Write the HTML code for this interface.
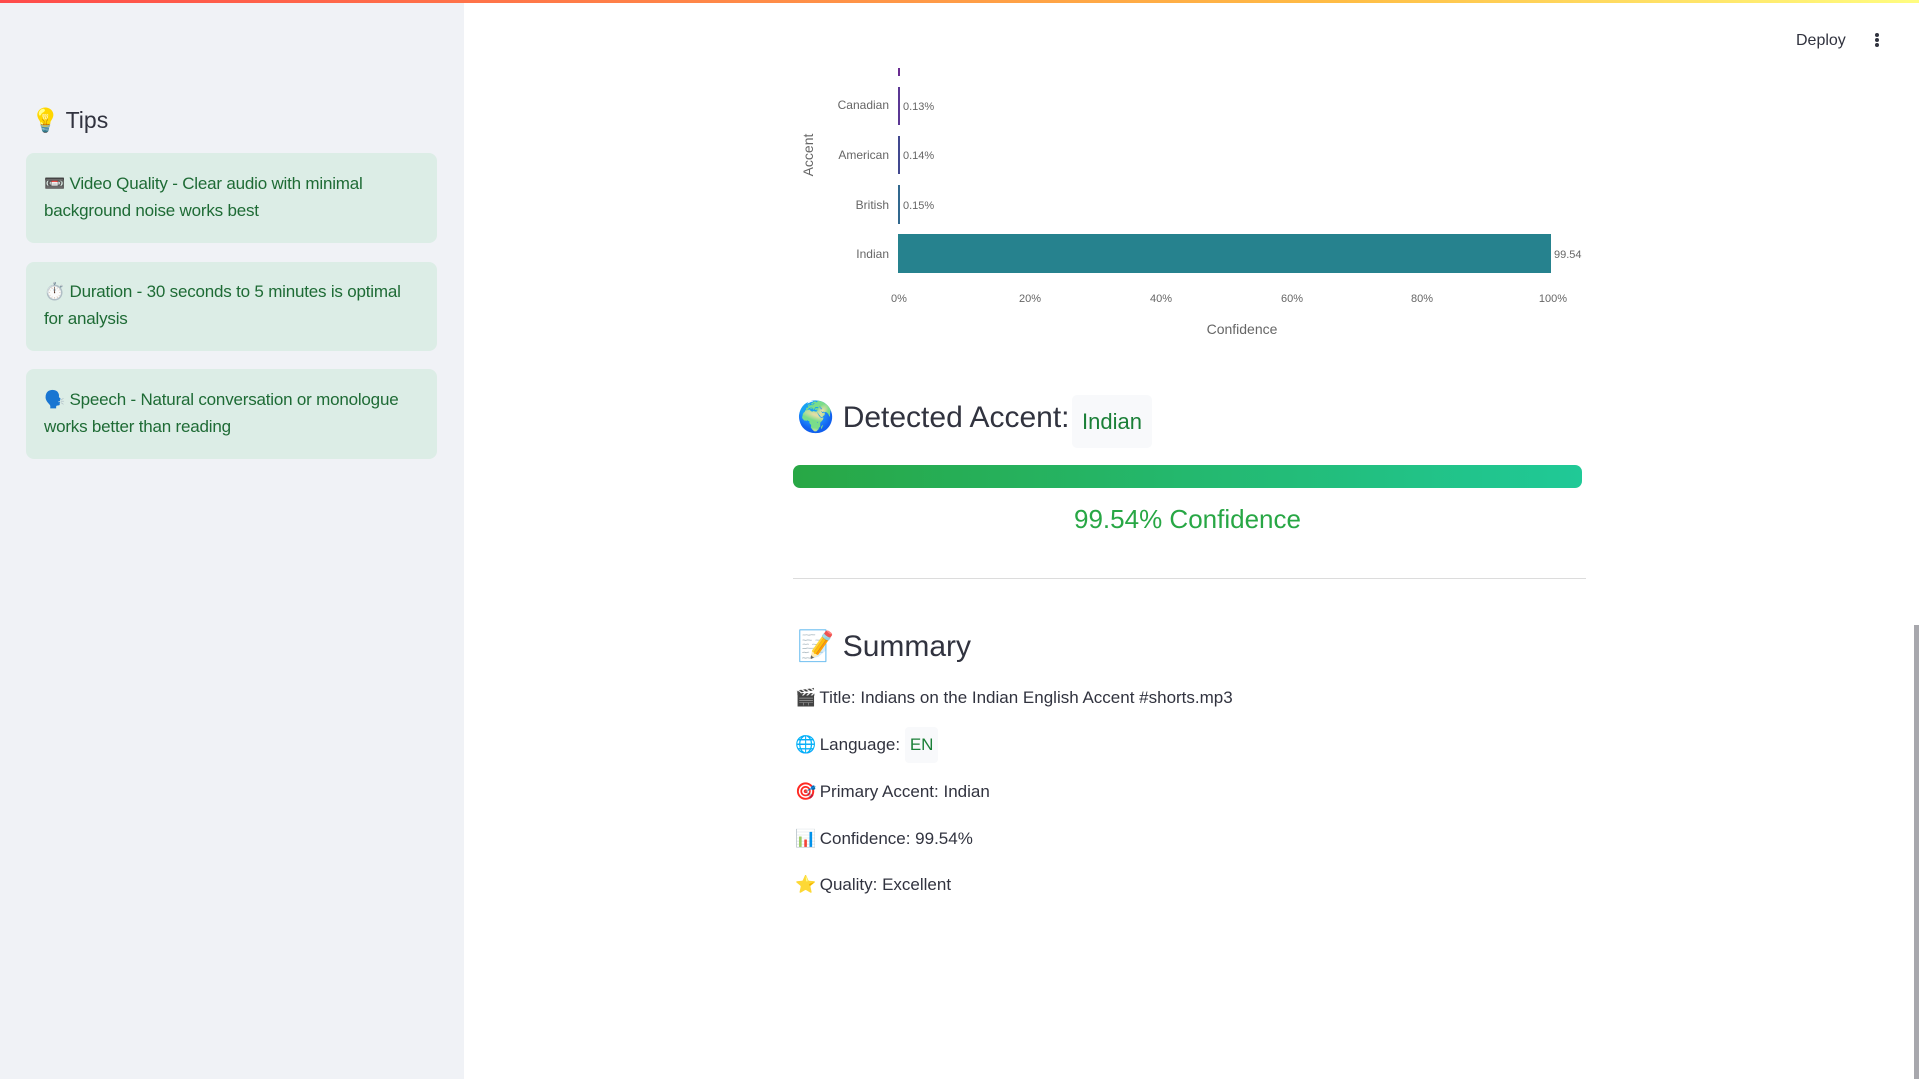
<!DOCTYPE html>
<html><head><meta charset="utf-8"><style>
*{margin:0;padding:0;box-sizing:border-box}
body{width:1919px;height:1079px;overflow:hidden;background:#fff;font-family:"Liberation Sans",sans-serif;position:relative;color:#31333f}
.top{position:absolute;left:0;top:0;width:1919px;height:3px;background:linear-gradient(90deg,#ff4b4b,#ffbd45 70%,#fffd80);z-index:5}
.side{position:absolute;left:0;top:0;width:464px;height:1079px;background:#f0f2f6}
.tips{position:absolute;left:31px;top:107px;font-size:23px;color:#31333f}
.card{position:absolute;left:26px;width:411px;background:#dcede6;border-radius:8px;padding:0 18px;color:#1e6b35;font-size:17px;line-height:27px;letter-spacing:-0.2px}
.abs{position:absolute;white-space:nowrap}
.li{position:absolute;left:795px;font-size:17px;line-height:22px;height:22px;color:#31333f;white-space:nowrap}
.li .ic{display:inline-block;width:20px}
</style></head><body>
<div class="top"></div>
<div class="side"></div>
<div class="tips">💡 Tips</div>
<div class="card" style="top:153px;height:90px;padding-top:17px">📼 Video Quality - Clear audio with minimal background noise works best</div>
<div class="card" style="top:262px;height:89px;padding-top:16px">⏱️ Duration - 30 seconds to 5 minutes is optimal for analysis</div>
<div class="card" style="top:369px;height:90px;padding-top:17px">🗣️ Speech - Natural conversation or monologue works better than reading</div>

<div class="abs" style="left:1796px;top:32px;font-size:16px;color:#31333f">Deploy</div>
<div class="abs" style="left:1875px;top:33px;width:4px">
<div style="width:4px;height:4px;border-radius:2px;background:#31333f;margin-bottom:1px"></div>
<div style="width:4px;height:4px;border-radius:2px;background:#31333f;margin-bottom:1px"></div>
<div style="width:4px;height:4px;border-radius:2px;background:#31333f"></div></div>

<svg class="abs" style="left:0;top:0" width="1919" height="360" font-family="Liberation Sans,sans-serif" font-size="12" fill="#666">
<rect x="898" y="68" width="2" height="8" fill="#6a2c91"/>
<rect x="898" y="87" width="2" height="38" fill="#5b3794"/>
<rect x="898" y="136" width="2" height="38" fill="#41488f"/>
<rect x="898" y="185" width="2" height="39" fill="#31688e"/>
<rect x="898" y="234" width="653" height="39" fill="#26828e"/>
<text x="889" y="109" text-anchor="end">Canadian</text>
<text x="889" y="159" text-anchor="end">American</text>
<text x="889" y="209" text-anchor="end">British</text>
<text x="889" y="258" text-anchor="end">Indian</text>
<text x="903" y="110" font-size="11">0.13%</text>
<text x="903" y="159" font-size="11">0.14%</text>
<text x="903" y="209" font-size="11">0.15%</text>
<text x="1554" y="258" font-size="11">99.54</text>
<g font-size="11" text-anchor="middle"><text x="899" y="302">0%</text><text x="1030" y="302">20%</text><text x="1161" y="302">40%</text><text x="1292" y="302">60%</text><text x="1422" y="302">80%</text><text x="1553" y="302">100%</text></g>
<text x="1242" y="334" text-anchor="middle" font-size="14">Confidence</text>
<text transform="translate(813,155) rotate(-90)" text-anchor="middle" font-size="14">Accent</text>
</svg>

<div class="abs" style="left:797px;top:400px;font-size:30px;color:#31333f">🌍 Detected Accent:</div>
<div class="abs" style="left:1072px;top:395px;width:80px;height:53px;background:#f8f9fb;border-radius:5px;color:#1a7f37;font-size:22px;line-height:53px;text-align:center">Indian</div>
<div class="abs" style="left:793px;top:465px;width:789px;height:23px;border-radius:7px;background:linear-gradient(90deg,#28a745,#20c997)"></div>
<div class="abs" style="left:793px;top:504px;width:789px;text-align:center;font-size:26px;color:#28a745">99.54% Confidence</div>
<div class="abs" style="left:793px;top:578px;width:793px;height:1px;background:#dcdcdc"></div>

<div class="abs" style="left:797px;top:629px;font-size:30px;color:#31333f">📝 Summary</div>
<div class="li" style="top:687px"><span class="ic">🎬</span> Title: Indians on the Indian English Accent #shorts.mp3</div>
<div class="li" style="top:734px"><span class="ic">🌐</span> Language: <span style="display:inline-block;background:#f8f9fb;color:#1a7f37;padding:0 5px;line-height:36px;height:36px;margin-top:-7px;vertical-align:top;border-radius:4px">EN</span></div>
<div class="li" style="top:781px"><span class="ic">🎯</span> Primary Accent: Indian</div>
<div class="li" style="top:828px"><span class="ic">📊</span> Confidence: 99.54%</div>
<div class="li" style="top:874px"><span class="ic">⭐</span> Quality: Excellent</div>

<div class="abs" style="left:1914px;top:625px;width:5px;height:454px;background:#a8a8ad"></div>
</body></html>
